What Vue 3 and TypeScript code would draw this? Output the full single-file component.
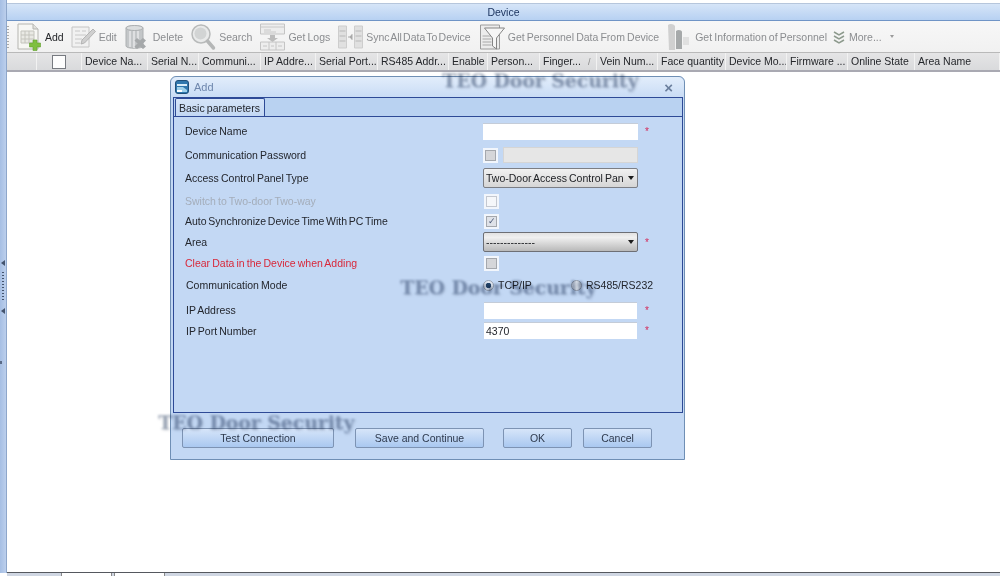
<script setup lang="ts">
interface Tool { label: string; icon: string; active?: boolean }
const tools: Tool[] = [
  { label: 'Add', icon: 'add', active: true },
  { label: 'Edit', icon: 'edit' },
  { label: 'Delete', icon: 'delete' },
  { label: 'Search', icon: 'search' },
  { label: 'Get Logs', icon: 'logs' },
  { label: 'Sync All Data To Device', icon: 'sync' },
  { label: 'Get Personnel Data From Device', icon: 'funnel' },
  { label: 'Get Information of Personnel', icon: 'info' },
]
const columns: string[] = [
  'Device Na...', 'Serial N...', 'Communi...', 'IP Addre...', 'Serial Port...', 'RS485 Addr...',
  'Enable', 'Person...', 'Finger...', 'Vein Num...', 'Face quantity', 'Device Mo...',
  'Firmware ...', 'Online State', 'Area Name',
]
</script>

<template>
  <div class="page">
    <aside class="strip">
      <div class="grip">
        <span class="tri"></span>
        <span class="dots"></span>
        <span class="tri"></span>
        <span class="tick"></span>
      </div>
    </aside>

    <main class="main">
      <header class="title">Device</header>

      <nav class="toolbar">
        <span class="tool-grip"></span>
        <button v-for="t in tools" :key="t.label" class="tool" :class="[t.icon, { active: t.active }]" type="button">
          <svg class="tool-icon" viewBox="0 0 25 28" aria-hidden="true">
            <g v-if="t.icon === 'add'">
              <path d="M1 1h15l5 5v20H1z" fill="#f7f7f4" stroke="#b5b5b0" />
              <path d="M16 1v5h5" fill="#e2e2de" stroke="#b5b5b0" />
              <path d="M4 8h13v12H4z" fill="#e9e9e4" stroke="#c4c4bd" />
              <path d="M4 12h13M4 16h13M8 8v12M12 8v12" stroke="#c4c4bd" fill="none" />
              <path d="M16 17h4v3h3.500v4H20v3.500h-4V24h-3.500v-4H16z" fill="#7fbf3f" stroke="#5f9f2c" stroke-width=".6" />
            </g>
            <g v-else-if="t.icon === 'edit'">
              <path d="M1 4h17v20H1z" fill="#f1f1f1" stroke="#c4c4c4" />
              <path d="M4 8h5M11 8h4M4 12h11M4 16h7M4 20h5" stroke="#c8c8c8" fill="none" />
              <path d="M10 21l1-4L22 6l2.500 2.500L13.500 20z" fill="#cfcfcf" stroke="#a9a9a9" stroke-width=".8" />
            </g>
            <g v-else-if="t.icon === 'delete'">
              <path d="M1 5c0-3 17-3 17 0v18c0 3-17 3-17 0z" fill="#c3c6c8" stroke="#adb0b2" />
              <ellipse cx="9.500" cy="5" rx="8.500" ry="2.500" fill="#dcdedf" stroke="#adb0b2" />
              <path d="M5 8v16M9 8v17M13 8v16" stroke="#e7e8e9" stroke-width="1.500" fill="none" />
              <path d="M12 15l3 2.500 3-2.500 3 2.500-3 3 3 3-3 2.500-3-2.500-3 2.500-2.500-2.500 3-3-3-3z" fill="#a5a8aa" />
            </g>
            <g v-else-if="t.icon === 'search'">
              <circle cx="10" cy="11" r="9" fill="#e9eaea" stroke="#b8baba" stroke-width="1.500" />
              <circle cx="9.500" cy="10.500" r="6" fill="#d2d4d4" />
              <path d="M16.500 18l6 7" stroke="#b5b7b7" stroke-width="3.500" stroke-linecap="round" />
            </g>
            <g v-else-if="t.icon === 'logs'">
              <path d="M.5 1h24v10H.5z" fill="#ededed" stroke="#c4c4c4" />
              <path d="M.5 4h24M4 7h7M4 9h12" stroke="#c8c8c8" fill="none" />
              <path d="M10 12h5v3h3l-5.500 4L7 15h3z" fill="#bcbcbc" />
              <path d="M.5 19h24v8H.5z" fill="#ededed" stroke="#c4c4c4" />
              <path d="M9 19v8M16 19v8M3 23h4M11 23h3M18 23h4" stroke="#c4c4c4" fill="none" />
            </g>
            <g v-else-if="t.icon === 'sync'">
              <path d="M.5 3h8v22h-8zM16.500 3h8v22h-8z" fill="#e0e0e0" stroke="#cdcdcd" />
              <path d="M1.500 8h6M1.500 13h6M1.500 18h6M17.500 8h6M17.500 13h6M17.500 18h6" stroke="#b8b8b8" fill="none" />
              <path d="M10 14h2l2-2.500v5L12 14" fill="#a8a8a8" stroke="#a8a8a8" />
            </g>
            <g v-else-if="t.icon === 'funnel'">
              <path d="M.5 2h19v24H.5z" fill="#ececec" stroke="#9c9c9c" />
              <path d="M2.500 13h9M2.500 16h9M2.500 19h9M2.500 22h9" stroke="#a8a8a8" fill="none" />
              <path d="M4.500 5h20l-8 10v11l-4-3v-8z" fill="#f6f6f6" stroke="#858585" />
            </g>
            <g v-else-if="t.icon === 'info'">
              <path d="M1 2c2-2 6-1 7 1v24H2z" fill="#d0d0d0" />
              <path d="M9 8c2-2 6-1 6 1v17H9z" fill="#a6a9aa" />
              <path d="M16 14h6v8h-6z" fill="#e0e0e0" />
            </g>
          </svg>
          <span>{{ t.label }}</span>
        </button>
        <button class="tool more" type="button">
          <svg class="more-icon" viewBox="0 0 14 14" aria-hidden="true">
            <path d="M2 2l5 3 5-3M2 6l5 3 5-3M2 10l5 3 5-3" fill="none" stroke="#8d9a8d" stroke-width="1.500" />
          </svg>
          <span>More...</span>
          <i class="caret"></i>
        </button>
      </nav>

      <div class="head">
        <div class="head-cell"></div>
        <div class="head-cell check-cell"><span class="head-check"></span></div>
        <div v-for="c in columns" :key="c" class="head-cell">
          {{ c }}<span v-if="c === 'Finger...'" class="sort">/</span>
        </div>
      </div>

      <div class="grid-body"></div>
      <footer class="tabs">
        <span class="page-tab first"></span>
        <span class="page-tab"></span>
      </footer>
    </main>

    <section class="dialog">
      <div class="dialog-title">
        <svg class="dialog-icon" viewBox="0 0 14 14" aria-hidden="true">
          <rect x=".5" y=".5" width="13" height="13" rx="2.500" fill="#2f77ad" stroke="#1f4f78" />
          <path d="M2 4h10v2H2z" fill="#d8ecf7" />
          <path d="M2 7h6l4 3v2H2z" fill="#9fd0ea" />
          <path d="M2 10h5v2H2z" fill="#ffffff" />
        </svg>
        <span class="dialog-name">Add</span>
        <span class="close">×</span>
      </div>

      <div class="panel">
        <div class="tab-strip"><span class="tab">Basic parameters</span></div>
        <div class="form">
          <div class="row r-name">
            <label>Device Name</label>
            <div class="field"><input class="text" type="text" /><b class="req">*</b></div>
          </div>
          <div class="row r-pw">
            <label>Communication Password</label>
            <div class="field">
              <span class="cb"><i class="box dim"></i></span>
              <input class="text disabled" type="text" disabled />
            </div>
          </div>
          <div class="row r-type">
            <label>Access Control Panel Type</label>
            <div class="field">
              <div class="select light"><span>Two-Door Access Control Pan</span><i class="arrow"></i></div>
            </div>
          </div>
          <div class="row r-switch">
            <label class="muted">Switch to Two-door Two-way</label>
            <div class="field shift"><span class="cb"><i class="box blank"></i></span></div>
          </div>
          <div class="row r-auto">
            <label>Auto Synchronize Device Time With PC Time</label>
            <div class="field shift"><span class="cb"><i class="box checked">✓</i></span></div>
          </div>
          <div class="row r-area">
            <label>Area</label>
            <div class="field">
              <div class="select dark"><span>--------------</span><i class="arrow"></i></div>
              <b class="req">*</b>
            </div>
          </div>
          <div class="row r-clear">
            <label class="danger">Clear Data in the Device when Adding</label>
            <div class="field shift"><span class="cb"><i class="box dim"></i></span></div>
          </div>
          <div class="row r-mode">
            <label class="inset">Communication Mode</label>
            <div class="field radios">
              <span class="radio on"></span><span class="radio-label first">TCP/IP</span>
              <span class="radio"></span><span class="radio-label">RS485/RS232</span>
            </div>
          </div>
          <div class="row r-ip">
            <label class="inset">IP Address</label>
            <div class="field shift"><input class="text narrow" type="text" /><b class="req">*</b></div>
          </div>
          <div class="row r-port">
            <label class="inset">IP Port Number</label>
            <div class="field shift"><input class="text narrow" type="text" value="4370" /><b class="req">*</b></div>
          </div>
        </div>
      </div>

      <div class="actions">
        <button class="btn b-test" type="button">Test Connection</button>
        <button class="btn b-save" type="button">Save and Continue</button>
        <button class="btn b-ok" type="button">OK</button>
        <button class="btn b-cancel" type="button">Cancel</button>
      </div>
    </section>

    <span class="mark m1">TEO Door Security</span>
    <span class="mark m2">TEO Door Security</span>
    <span class="mark m3">TEO Door Security</span>
  </div>
</template>

<style>
html, body { margin: 0; background: #fff; }
</style>

<style scoped>
.page {
  position: relative;
  width: 1000px;
  height: 576px;
  overflow: hidden;
  display: flex;
  background: #fff;
  font-family: "Liberation Sans", Arial, sans-serif;
  font-size: 10.5px;
  color: #23262d;
}
.strip {
  width: 6px;
  height: 573px;
  flex: none;
  background: linear-gradient(90deg, #a6bfe4, #bccfec);
  border-right: 1px solid #8ea7cb;
  box-sizing: content-box;
}
.grip {
  margin-top: 260px;
  display: flex;
  flex-direction: column;
  align-items: center;
  gap: 6px;
}
.tri {
  width: 0;
  height: 0;
  border: 3px solid transparent;
  border-right: 4px solid #44546e;
  border-left: 0;
}
.dots {
  width: 2px;
  height: 30px;
  background: repeating-linear-gradient(180deg, #44546e 0 1px, transparent 1px 3px);
}
.tick {
  align-self: flex-start;
  width: 2px;
  height: 3px;
  margin-top: 41px;
  background: #5a6b88;
}
.main {
  flex: 1;
  min-width: 0;
  display: flex;
  flex-direction: column;
}
.title {
  margin-top: 3px;
  height: 16px;
  line-height: 16px;
  text-align: center;
  font-size: 10.5px;
  color: #1d3560;
  background: linear-gradient(180deg, #d6e5f8, #b7d1f2);
  border-top: 1px solid #b6c6dc;
  border-bottom: 1px solid #6f94c6;
}
.toolbar {
  height: 32px;
  display: flex;
  align-items: center;
  gap: 8px;
  background: linear-gradient(180deg, #f7f7f7, #f1f1f1);
  border-bottom: 1px solid #b9b9b9;
  box-sizing: border-box;
  word-spacing: -0.8px;
}
.tool-grip {
  width: 2px;
  height: 22px;
  background: repeating-linear-gradient(180deg, #aaa 0 1px, transparent 1px 3px);
}
.tool {
  display: flex;
  align-items: center;
  gap: 3px;
  padding: 0;
  border: 0;
  background: none;
  font: inherit;
  word-spacing: inherit;
  color: #8b8d90;
  white-space: nowrap;
}
.tool.active { color: #25272b; }
.tool.edit { margin-left: -1px; }
.tool.sync { word-spacing: -1.7px; }
.tool.funnel { margin-left: 1px; }
.tool.more { margin-left: -3px; }
.tool-icon { width: 25px; height: 28px; flex: none; }
.more-icon { width: 14px; height: 14px; }
.caret {
  margin-left: 5px;
  width: 0;
  height: 0;
  border: 2.5px solid transparent;
  border-top: 3px solid #9a9a9a;
  border-bottom: 0;
}
.head {
  height: 17px;
  display: grid;
  grid-template-columns: 30px 45px 66px 51px 62px 55px 62px 71px 39px 52px 57px 61px 68px 61px 61px 67px 1fr;
  background: linear-gradient(180deg, #e5e5e6, #d9dadc);
  border-bottom: 2px solid #a9a9b2;
  line-height: 17px;
  color: #25272b;
}
.head-cell {
  padding-left: 3px;
  border-right: 1px solid #f2f2f2;
  white-space: nowrap;
  overflow: hidden;
}
.check-cell { display: flex; align-items: center; justify-content: center; padding: 0; }
.head-check {
  width: 12px;
  height: 12px;
  background: #fdfdfd;
  border: 1px solid #777a80;
}
.sort { margin-left: 7px; color: #888; font-size: 9px; }
.grid-body { flex: 1; background: #fff; }
.tabs {
  height: 3px;
  display: flex;
  gap: 2px;
  padding-left: 54px;
  background: #cfd6e2;
  border-top: 1px solid #55585e;
}
.page-tab {
  width: 49px;
  background: #fff;
  border-left: 1px solid #888;
  border-right: 1px solid #888;
}

.dialog {
  position: absolute;
  left: 170px;
  top: 76px;
  width: 515px;
  height: 384px;
  box-sizing: border-box;
  display: flex;
  flex-direction: column;
  background: #c3d8f4;
  border: 1px solid #6f8fb5;
  border-radius: 6px 6px 0 0;
  padding: 0 1px 0 2px;
}
.dialog-title {
  height: 20px;
  flex: none;
  display: flex;
  align-items: center;
  gap: 5px;
  background: linear-gradient(180deg, #e2edfb, #c9dcf5);
  margin: 0 -1px 0 -2px;
  padding-left: 4px;
  border-radius: 6px 6px 0 0;
}
.dialog-icon { width: 14px; height: 14px; flex: none; }
.dialog-name { color: #6f87ad; font-size: 11px; }
.close {
  margin-left: auto;
  margin-right: 11px;
  font-size: 15px;
  line-height: 15px;
  font-weight: bold;
  color: #6b7f9d;
}
.panel {
  height: 316px;
  flex: none;
  display: flex;
  flex-direction: column;
  box-sizing: border-box;
  border: 1px solid #2e4a96;
}
.tab-strip {
  height: 19px;
  flex: none;
  box-sizing: border-box;
  background: #b9d2f1;
  border-bottom: 1px solid #2e4a96;
  display: flex;
  padding-left: 1px;
}
.tab {
  width: 90px;
  height: 18px;
  box-sizing: border-box;
  padding-left: 3px;
  line-height: 18px;
  font-size: 10.5px;
  word-spacing: -0.8px;
  background: linear-gradient(180deg, #d5e4f8, #c3d8f4);
  border: 1px solid #2e4a96;
  border-bottom: 0;
  border-radius: 2px 2px 0 0;
}
.form {
  padding: 2px 0 0 11px;
  display: grid;
  grid-template-rows: 24px 24px 22px 24px 16px 26px 16px 28px 22px 20px;
  word-spacing: -0.8px;
}
.row {
  display: grid;
  grid-template-columns: 298px 1fr;
  align-items: center;
}
label { white-space: nowrap; }
.inset { padding-left: 1px; }
.r-auto label { word-spacing: -1.2px; }
.muted { color: #a4adba; }
.danger { color: #d8283a; }
.field {
  display: flex;
  align-items: center;
  gap: 5px;
  position: relative;
}
.shift { padding-left: 1px; }
.r-port .field { margin-bottom: 2px; }
.text {
  width: 155px;
  height: 17px;
  box-sizing: border-box;
  padding: 0 2px;
  border: 0;
  border-top: 1px solid #c4ccd8;
  background: #fff;
  outline: 0;
  font: inherit;
  color: #23262d;
}
.text.narrow { width: 153px; }
.text.disabled {
  width: 135px;
  height: 16px;
  background: #e6e6e6;
  border: 1px solid #d5d5d5;
}
.req {
  position: absolute;
  left: 162px;
  top: 50%;
  transform: translateY(-50%);
  color: #d32a5a;
  font-weight: normal;
  font-size: 10px;
}
.cb {
  width: 15px;
  height: 15px;
  flex: none;
  display: flex;
  align-items: center;
  justify-content: center;
  background: #f2f6fc;
}
.box {
  width: 9px;
  height: 9px;
  display: block;
  font-style: normal;
  border: 1px solid #a5a8ad;
  background: #d5d6d9;
  font-size: 9px;
  line-height: 9px;
  text-align: center;
  color: #4b5a78;
}
.box.blank { background: #f5f7fa; border-color: #c4c8d0; }
.box.checked { background: #dfe2e8; }
.select {
  width: 155px;
  height: 20px;
  box-sizing: border-box;
  display: flex;
  align-items: center;
  justify-content: space-between;
  padding: 0 3px 0 2px;
  border-radius: 2px;
  border: 1px solid #7c7e84;
  color: #202226;
  white-space: nowrap;
  overflow: hidden;
}
.select.light { background: linear-gradient(180deg, #f1f1f1, #d6d6d6); }
.select.dark { background: linear-gradient(180deg, #e2e2e2 0%, #f0f0f0 25%, #b9b9b9 100%); border-color: #6d6f75; }
.arrow {
  width: 0;
  height: 0;
  flex: none;
  border: 3px solid transparent;
  border-top: 4px solid #1c1c1c;
  border-bottom: 0;
}
.radios { gap: 0; }
.radio {
  width: 11px;
  height: 11px;
  flex: none;
  box-sizing: border-box;
  border-radius: 50%;
  background: #dfe5ee;
  border: 1px solid #9aa4b3;
}
.radio.on { background: radial-gradient(circle, #264a72 0 2.5px, #e3e9f2 3px); }
.radio-label { margin-left: 4px; }
.radio-label.first { width: 73px; }
.actions {
  flex: 1;
  display: flex;
  align-items: flex-start;
  padding: 15px 0 0 9px;
}
.btn {
  height: 20px;
  padding: 0;
  box-sizing: border-box;
  border: 1px solid #7d93b3;
  border-radius: 2px;
  background: linear-gradient(180deg, #d6e5f9, #a9c8f0);
  font: inherit;
  color: #2e3a4e;
}
.b-test { width: 152px; margin-right: 21px; }
.b-save { width: 129px; margin-right: 19px; }
.b-ok { width: 69px; margin-right: 11px; }
.b-cancel { width: 69px; }

.mark {
  position: absolute;
  font-family: "DejaVu Serif", "Liberation Serif", serif;
  font-weight: bold;
  font-size: 18.8px;
  line-height: 24px;
  color: rgba(112, 128, 152, 0.5);
  text-shadow: 1px 1px 2px rgba(110, 120, 140, 0.45);
  filter: blur(0.9px);
  mix-blend-mode: multiply;
  white-space: nowrap;
  pointer-events: none;
}
.m1 { left: 442px; top: 68px; }
.m2 { left: 400px; top: 275px; }
.m3 { left: 158px; top: 410px; }
</style>
